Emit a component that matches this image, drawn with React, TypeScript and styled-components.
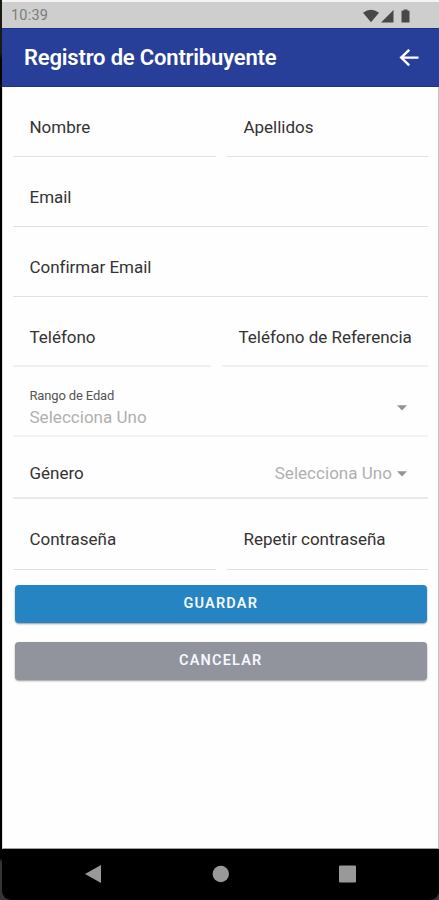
import React from "react";
import styled, { createGlobalStyle } from "styled-components";

const GlobalStyle = createGlobalStyle`
  * { box-sizing: border-box; }
  html, body { margin: 0; padding: 0; background: #000; }
  body { font-family: Roboto, "Liberation Sans", sans-serif; overflow: hidden; }
`;

const Frame = styled.div`
  width: 439px;
  height: 900px;
  padding-left: 2px;
  background: linear-gradient(#1b1b16 0 52px, #000 60px 858px, #343434 862px);
`;

const Screen = styled.div`
  display: flex;
  flex-direction: column;
  width: 437px;
  height: 900px;
  border-top: 2px solid #f4f4f4;
  border-radius: 0 0 9px 9px;
  background: #000;
  overflow: hidden;
`;

const StatusBar = styled.div`
  display: flex;
  align-items: center;
  justify-content: space-between;
  height: 26px;
  padding: 1px 29px 0 9px;
  background: #cecece;
  color: #7c7c7c;
  font-size: 14.5px;
  letter-spacing: 0.2px;
`;

const Header = styled.header`
  display: flex;
  align-items: center;
  justify-content: space-between;
  height: 59px;
  padding: 0 20px 0 22px;
  background: #273f99;
  border-top: 1px solid #1b318b;
  border-bottom: 1px solid #1b318b;
  color: #fff;
`;

const Title = styled.h1`
  margin: 0;
  font-size: 22px;
  font-weight: 600;
  line-height: 26px;
  letter-spacing: -0.18px;
`;

const IconButton = styled.button`
  display: flex;
  padding: 0;
  border: 0;
  background: none;
  color: inherit;
`;

const Form = styled.form`
  flex: none;
  height: 762px;
  padding: 0 10px 0 9.5px;
  border-right: 1px solid #c4c4c4;
  border-bottom: 1px solid #a0a0a0;
  border-left: 1px solid #e2e2e2;
  background: #fefefe;
`;

const Row = styled.div<{ $height?: number; $columns?: string }>`
  display: grid;
  grid-template-columns: ${(p) => p.$columns ?? "minmax(0, 1fr)"};
  column-gap: 11px;
  height: ${(p) => p.$height ?? 70}px;
`;

const Field = styled.label<{ $line?: string; $thick?: boolean }>`
  display: flex;
  align-items: center;
  justify-content: space-between;
  padding: ${(p) => (p.$thick ? 12 : 10)}px 16px 0 17px;
  border-bottom: ${(p) => (p.$thick ? 2 : 1)}px solid ${(p) => p.$line ?? "#e1e1e1"};
  white-space: nowrap;
`;

const Label = styled.span`
  color: #333;
  font-size: 17px;
  line-height: 22px;
  letter-spacing: -0.02px;
`;

const SmallLabel = styled.span`
  color: #555;
  font-size: 13px;
  line-height: 18px;
  letter-spacing: -0.15px;
`;

const Placeholder = styled.span`
  color: #b0b0b0;
  font-size: 17px;
  line-height: 22px;
  letter-spacing: 0.03px;
`;

const Stack = styled.span`
  display: flex;
  flex-direction: column;
  gap: 1px;
`;

const Choice = styled.span`
  display: flex;
  align-items: center;
  gap: 5px;
  margin-right: 5px;
`;

const Actions = styled.div`
  display: grid;
  gap: 19px;
  padding: 15px 1.5px 0 2.5px;
`;

const Button = styled.button<{ $color: string }>`
  height: 38px;
  padding: 0;
  border: 0;
  border-radius: 4px;
  background: ${(p) => p.$color};
  box-shadow: 0 1px 2px rgba(0, 0, 0, 0.4);
  color: #f4f8ff;
  font: 600 14.5px/38px Roboto, "Liberation Sans", sans-serif;
  letter-spacing: 1.2px;
`;

const NavBar = styled.nav`
  display: flex;
  justify-content: space-between;
  height: 51px;
  padding: 16px 83.5px 0 82.5px;
`;

const Caret = () => (
  <svg width="10" height="8" viewBox="0 0 10 8">
    <path d="M0 2.3h10L5 7.6z" fill="#949494" />
  </svg>
);

export default function App() {
  return (
    <>
      <GlobalStyle />
      <Frame>
        <Screen>
          <StatusBar>
            <span>10:39</span>
            <svg width="47" height="14" viewBox="0 0 47 14" fill="#484848">
              <path d="M0 3.8Q8-2.3 16 3.8L8 13.2z" />
              <path d="M30.5 1v12.4H18z" />
              <path d="M40.5 .4h4v1.3h2v11.7h-8V1.7h2z" />
            </svg>
          </StatusBar>
          <Header>
            <Title>Registro de Contribuyente</Title>
            <IconButton type="button" aria-label="Volver">
              <svg width="20" height="18" viewBox="0 0 20 18" fill="none" stroke="#fff" strokeWidth="2.4">
                <path d="M10.2 .8 2.2 8.6l8 7.8M2 8.6h17.5" />
              </svg>
            </IconButton>
          </Header>
          <Form>
            <Row $columns="203px minmax(0, 1fr)">
              <Field><Label>Nombre</Label></Field>
              <Field><Label>Apellidos</Label></Field>
            </Row>
            <Row><Field><Label>Email</Label></Field></Row>
            <Row><Field><Label>Confirmar Email</Label></Field></Row>
            <Row $columns="198px minmax(0, 1fr)">
              <Field $line="#f0f0f0" $thick><Label>Teléfono</Label></Field>
              <Field $line="#f0f0f0" $thick><Label>Teléfono de Referencia</Label></Field>
            </Row>
            <Row>
              <Field $line="#f3f3f3" $thick>
                <Stack>
                  <SmallLabel>Rango de Edad</SmallLabel>
                  <Placeholder>Selecciona Uno</Placeholder>
                </Stack>
                <Choice><Caret /></Choice>
              </Field>
            </Row>
            <Row $height={62}>
              <Field $line="#e9e9e9" $thick>
                <Label>Género</Label>
                <Choice><Placeholder>Selecciona Uno</Placeholder><Caret /></Choice>
              </Field>
            </Row>
            <Row $height={71} $columns="203px minmax(0, 1fr)">
              <Field><Label>Contraseña</Label></Field>
              <Field><Label>Repetir contraseña</Label></Field>
            </Row>
            <Actions>
              <Button type="button" $color="#2784c3">GUARDAR</Button>
              <Button type="button" $color="#91949c">CANCELAR</Button>
            </Actions>
          </Form>
          <NavBar>
            <svg width="17" height="18" viewBox="0 0 17 18"><path d="M16 0v18L0 9z" fill="#999" /></svg>
            <svg width="17" height="18" viewBox="0 0 17 18"><circle cx="8.8" cy="9" r="8.2" fill="#999" /></svg>
            <svg width="17" height="18" viewBox="0 0 17 18"><rect y=".5" width="17" height="17" rx="1" fill="#999" /></svg>
          </NavBar>
        </Screen>
      </Frame>
    </>
  );
}
